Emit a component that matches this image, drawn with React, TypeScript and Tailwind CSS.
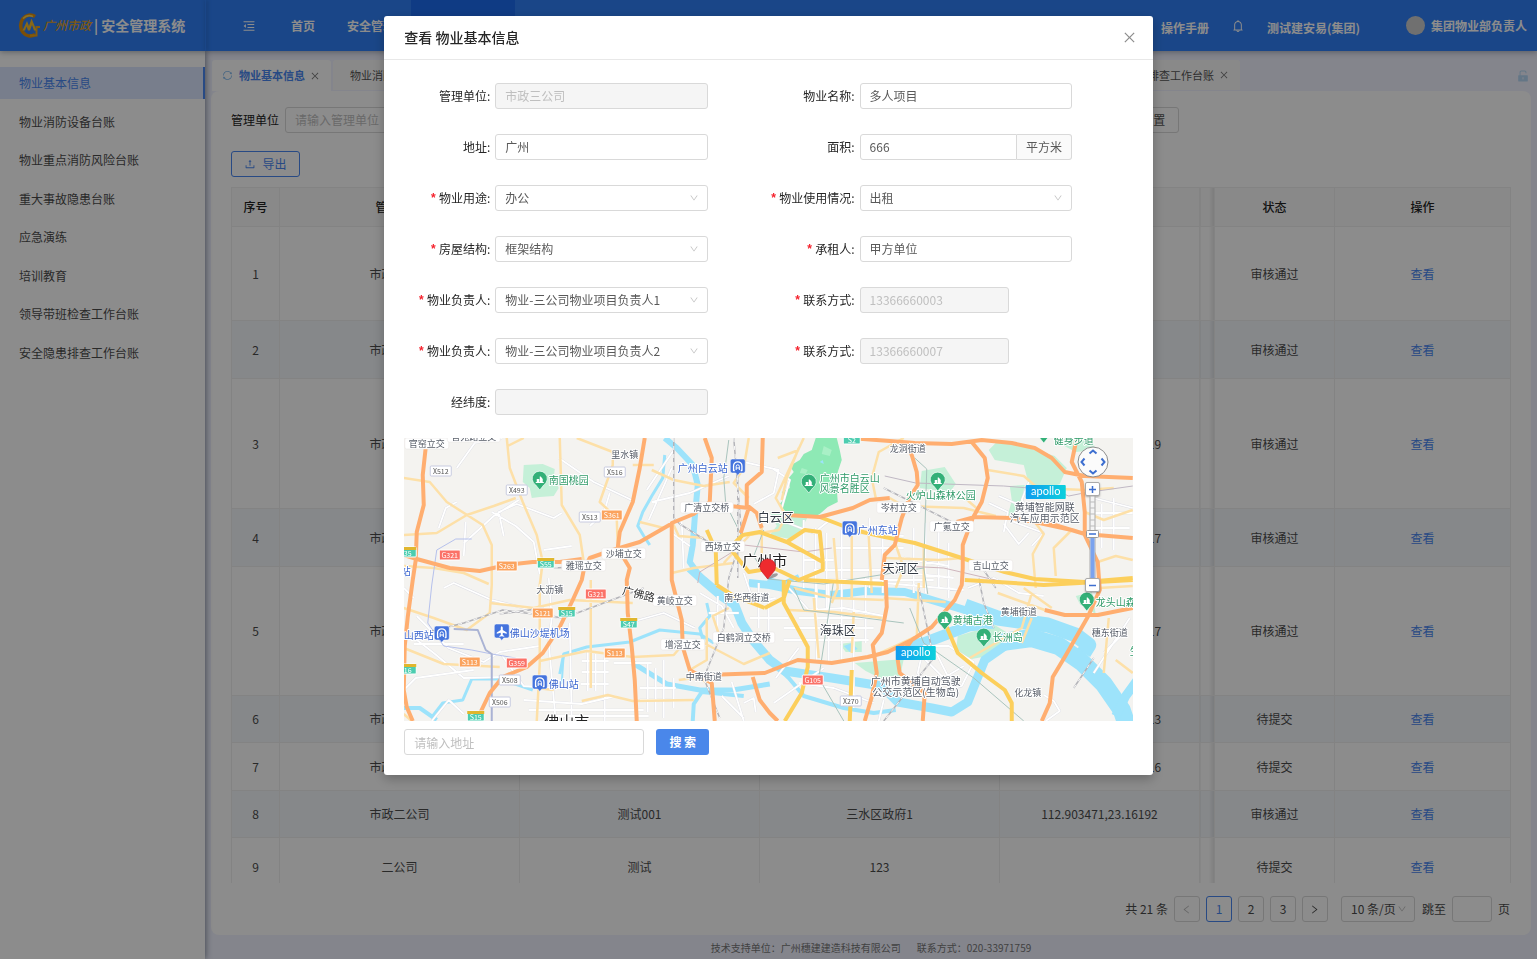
import * as React from "react";
import {
  AiFillUnlock,
  AiOutlineBell,
  AiOutlineClose,
  AiOutlineDown,
  AiOutlineLeft,
  AiOutlineMenuFold,
  AiOutlineRight,
  AiOutlineSync,
  AiOutlineUpload,
} from "react-icons/ai";

const menuItems = [
  "物业基本信息",
  "物业消防设备台账",
  "物业重点消防风险台账",
  "重大事故隐患台账",
  "应急演练",
  "培训教育",
  "领导带班检查工作台账",
  "安全隐患排查工作台账",
];

type Row = {
  company: string;
  name: string;
  address: string;
  position: string;
  status: string;
  height: string;
};

const rows: Row[] = [
  { company: "市政三公司", name: "", address: "", position: "", status: "审核通过", height: "h-[94px]" },
  { company: "市政三公司", name: "", address: "", position: "", status: "审核通过", height: "h-[58px]" },
  { company: "市政三公司", name: "", address: "", position: "113.264385,23.129119", status: "审核通过", height: "h-[130px]" },
  { company: "市政三公司", name: "", address: "", position: "113.264385,23.129117", status: "审核通过", height: "h-[58px]" },
  { company: "市政三公司", name: "", address: "", position: "113.264385,23.129117", status: "审核通过", height: "h-[129px]" },
  { company: "市政三公司", name: "", address: "", position: "113.264385,23.129113", status: "待提交", height: "h-[47px]" },
  { company: "市政三公司", name: "", address: "", position: "113.264385,23.129116", status: "待提交", height: "h-[48px]" },
  { company: "市政二公司", name: "测试001", address: "三水区政府1", position: "112.903471,23.16192", status: "审核通过", height: "h-[47px]" },
  { company: "二公司", name: "测试", address: "123", position: "", status: "待提交", height: "h-[59px]" },
];

function Logo() {
  return (
    <div className="flex w-[205px] shrink-0 items-center pl-[18px]">
      <svg className="h-[25px] w-[23px]" viewBox="0 0 23 25" fill="none">
        <path d="M17 3.500A9.500 10.500 0 1 0 17 21.500" stroke="#e08e0c" strokeWidth="3.500" />
        <path d="M12 22.500h6.500V14H22" stroke="#eda51a" strokeWidth="2" />
        <path d="M4.500 17.500L9 8l2 5 2.500-7.500 5 12h-2.500l-2-5.500-2 5.500h-2l-1.500-4-1.500 4z" fill="#f7bd2a" />
        <path d="M5 5.500A9 9 0 0 1 15 3.500" stroke="#f9cf4a" strokeWidth="1.500" />
      </svg>
      <span className="ml-[2px] font-['Liberation_Serif','Noto_Sans_CJK_SC',sans-serif] text-[12px] font-medium italic text-[#e5a323]">
        广州市政
      </span>
      <span className="ml-[3px] text-[14px] font-bold text-white">| 安全管理系统</span>
    </div>
  );
}

function Header() {
  return (
    <header className="relative z-10 flex h-[51px] shrink-0 bg-[#3080f8] text-[12px] font-bold text-white shadow-[0_1px_6px_rgba(0,21,41,0.35)]">
      <Logo />
      <div className="w-px shadow-[1px_0_4px_rgba(0,0,0,0.45)]" />
      <button className="ml-9 flex w-[14px] items-center" aria-label="收起菜单">
        <AiOutlineMenuFold size={14} />
      </button>
      <nav className="ml-[19px] flex">
        <a href="#" className="flex items-center px-4">首页</a>
        <a href="#" className="flex items-center px-4">安全管理</a>
        <a href="#" className="flex w-[104px] items-center justify-center bg-[#1d6cf0]">物业管理</a>
      </nav>
      <div className="ml-auto flex items-center pr-[10px]">
        <a href="#" className="pt-1">操作手册</a>
        <button className="ml-[22px]" aria-label="通知">
          <AiOutlineBell size={14} />
        </button>
        <a href="#" className="ml-[22px] pt-1">测试建安易(集团)</a>
        <span className="ml-[46px] h-[19px] w-[19px] rounded-full bg-[#ccc]" />
        <span className="ml-[6px]">集团物业部负责人</span>
      </div>
    </header>
  );
}

function Sidebar() {
  return (
    <aside className="z-[5] w-[205px] shrink-0 bg-white pt-4 text-[12px] shadow-[1px_0_6px_rgba(0,21,41,0.45)]">
      <nav className="flex h-[302px] flex-col justify-between">
        {menuItems.map((item, i) => (
          <a
            key={item}
            href="#"
            className={`flex h-8 items-center pl-[19px] ${
              i === 0 ? "border-r-2 border-[#4987f0] bg-[#dae6ff] text-[#4987f0]" : "text-[#4c4c4c]"
            }`}
          >
            {item}
          </a>
        ))}
      </nav>
    </aside>
  );
}

function Tabs() {
  return (
    <div className="flex h-[31px] items-stretch gap-[2px] pl-px text-[11px]">
      {menuItems.map((item, i) => (
        <div
          key={item}
          className={`flex shrink-0 items-center rounded-t-[3px] ${
            i === 0
              ? "bg-white pl-[10px] pr-[11px] font-bold text-[#4987f0]"
              : "mb-px bg-[#fafafa] pl-[17px] pr-[11px] text-[#555]"
          }`}
        >
          {i === 0 && <AiOutlineSync className="mr-[6px] text-[#7fb8ee]" size={11} />}
          {item}
          <button className="ml-[5px] w-[10px] text-[#777]" aria-label={`关闭${item}`}>
            <AiOutlineClose size={10} />
          </button>
        </div>
      ))}
      <AiFillUnlock className="ml-auto mr-px self-center text-[#b7d8f5]" size={14} />
    </div>
  );
}

function Filters() {
  return (
    <form className="flex w-[948px] items-center justify-between">
      {["管理单位", "物业名称", "物业地址", "状态"].map((label) => (
        <label key={label} className="flex items-center gap-[6px] text-[#222]">
          {label}
          <input
            className="h-[26px] w-[140px] rounded-[3px] border border-[#d9d9d9] px-[9px] pb-[2px] placeholder:text-[#bfbfbf]"
            placeholder={`请输入${label}`}
          />
        </label>
      ))}
      <button type="button" className="h-[26px] w-[54px] rounded-[3px] border border-[#d9d9d9] text-[#555]">
        重 置
      </button>
    </form>
  );
}

function DataTable() {
  const cell = "border border-[#efefef] text-center";
  const edge = "border border-[#efefef] bg-linear-to-r from-transparent from-60% to-black/10";
  return (
    <div className="mt-[10px] h-[696px] overflow-hidden">
      <table className="w-full table-fixed border-collapse text-[12px] text-[#4c4c4c]">
        <colgroup>
          <col className="w-[48px]" />
          <col />
          <col />
          <col />
          <col className="w-[200px]" />
          <col className="w-[15px]" />
          <col className="w-[120px]" />
          <col className="w-[176px]" />
        </colgroup>
        <thead>
          <tr className="h-[39px] bg-[#fafafa] text-[#222]">
            <th className={`${cell} font-medium`}>序号</th>
            <th className={`${cell} font-medium`}>管理单位</th>
            <th className={`${cell} font-medium`}>物业名称</th>
            <th className={`${cell} font-medium`}>地址</th>
            <th className={`${cell} font-medium`}>经纬度</th>
            <th className={edge} />
            <th className={`${cell} font-medium`}>状态</th>
            <th className={`${cell} font-medium`}>操作</th>
          </tr>
        </thead>
        <tbody>
          {rows.map((row, i) => (
            <tr key={i} className={`${row.height} ${i % 2 === 1 ? "bg-[#f4f8fc]" : "bg-white"}`}>
              <td className={cell}>{i + 1}</td>
              <td className={cell}>{row.company}</td>
              <td className={cell}>{row.name}</td>
              <td className={cell}>{row.address}</td>
              <td className={cell}>{row.position}</td>
              <td className={edge} />
              <td className={cell}>{row.status}</td>
              <td className={cell}>
                <a href="#" className="text-[#4987f0]">查看</a>
              </td>
            </tr>
          ))}
        </tbody>
      </table>
    </div>
  );
}

function Pagination() {
  const box = "flex h-[26px] w-[26px] items-center justify-center rounded-[3px] border";
  return (
    <div className="mt-[13px] flex items-center justify-end gap-[6px] text-[12px] text-[#4c4c4c]">
      <span>共 21 条</span>
      <button className={`${box} border-[#d9d9d9] text-[#bbb]`} aria-label="上一页">
        <AiOutlineLeft size={11} />
      </button>
      {[1, 2, 3].map((page) => (
        <button
          key={page}
          className={`${box} ${page === 1 ? "border-[#4987f0] text-[#4987f0]" : "border-[#d9d9d9]"}`}
        >
          {page}
        </button>
      ))}
      <button className={`${box} border-[#d9d9d9]`} aria-label="下一页">
        <AiOutlineRight size={11} />
      </button>
      <div className="relative ml-[7px]">
        <select
          aria-label="每页条数"
          className="h-[26px] w-[74px] appearance-none rounded-[3px] border border-[#d9d9d9] bg-white pl-[9px]"
        >
          <option>10 条/页</option>
        </select>
        <AiOutlineDown className="pointer-events-none absolute right-2 top-2 text-[#bbb]" size={10} />
      </div>
      <label className="flex items-center gap-[6px] px-px">
        跳至
        <input className="h-[26px] w-[40px] rounded-[3px] border border-[#d9d9d9]" />
        页
      </label>
    </div>
  );
}

/* ---------- map ---------- */

const water: [string, number][] = [
  ["M261 0L273 10 289 27 294 47 291 80 289 107 286 124 296 138 306 147", 6],
  ["M261 17L259 40 248 58 239 74 234 88 240 98 246 107", 3],
  ["M286 130L299 142 319 159 331 167 338 185 349 202 366 222 381 233 428 240 478 248 494 264 528 270 548 274 564 264 574 239 581 222 601 208 628 201", 9],
  ["M345 145L366 147 395 153 428 157 461 153 501 154 528 162 561 172 594 181", 8],
  ["M561 168L594 180 644 187 672 197 685 207 680 215", 15],
  ["M502 208L520 205 541 197 565 188 590 185", 11],
  ["M598 204L628 200 655 208 678 224 700 246 718 272 724 290", 18],
  ["M735 240L722 258 712 278", 9],
  ["M366 222L385 240 400 258 440 270 470 275 492 272", 4],
  ["M0 270L16 270 33 282", 4],
  ["M29 278L39 265 59 262 68 241 96 241 129 252", 3],
  ["M156 236L160 216 183 209 226 204 256 192 296 196 310 205", 3],
  ["M229 225L250 238 263 246 296 252 329 252 366 246", 5],
  ["M289 283L290 266 298 254 340 258", 4],
  ["M300 205L296 190 306 178 303 165", 3],
  ["M160 216L158 245 138 251", 2],
  ["M364 141L380 145 395 138", 4],
];

const greens = [
  "M120 27L139 26 151 31 150 40 155 50 150 58 136 59 128 60 126 50 119 44z",
  "M366 74L404 79 396 94 386 101 366 97 373 88z",
  "M594 3L625 10 651 18 663 30 656 46 640 52 625 46 620 27 591 22 585 12z",
  "M661 1L688 1 692 12 672 14 655 5z",
  "M518 33L541 29 552 46 546 54 530 52 516 50z",
  "M606 48L621 47 616 72 604 78 608 62z",
  "M554 198L591 187 604 195 590 217 568 221 552 214z",
  "M451 225L500 221 496 240 478 241 462 233z",
  "M436 206L458 203 458 214 442 214z",
  "M672 158L688 154 692 176 676 166z",
];

const localRoads =
  "M35 90L42 70 53 64M53 30L71 5M70 5L98 0M60 105L68 98 90 78 115 62M88 74L112 88 130 104 136 136M62 84L60 118M100 98L95 74 113 66 150 80 158 75M140 112L168 108M155 20L190 44 228 62M186 88L200 75 206 55M40 150L50 145 88 162 120 170 155 180M13 178L45 210 80 224 96 214 136 208M0 192L30 215 60 240 99 239M98 217L120 248 160 250M28 283L45 262 60 276M145 140L148 180 145 205 152 283M166 185L168 283M184 212V253M192 216V253M201 216V283M178 223H205M178 234H205M177 246H205M120 262L178 266 212 258M125 272H240M152 278H245M244 225V274M252 230V274M260 222V280M270 240V270M236 250H272M236 262H268M210 225H248M224 185L260 175 291 190M243 52L270 12M248 64L286 55 325 38M268 30L245 82M268 95L286 108M278 84L280 130M296 155L318 168 330 190M305 175H335M314 158V205M340 24L375 32 370 55 350 66M368 30L386 42 378 70M384 85L410 95 426 82M400 82V150M412 90V160M423 95V170M438 92V160M466 80V150M479 96V155M455 95L500 98M430 110H500M400 122H430M410 132H478M425 142H530M385 150L405 172 440 170 480 178M395 180H475M413 145V225M425 145V225M438 145V225M450 160V270M462 140V205M380 190H470M380 202H465M395 245L430 250 470 265M520 208L545 208 570 224 558 248 530 255 514 235zM520 220L540 240 560 228M530 210L550 250M640 257L650 263 656 273 642 283M595 58L618 68 610 84 640 95 628 108M585 65L604 74 600 94M625 44L618 62 628 78 660 85M600 86L615 106 625 95M690 60L729 70M698 66V110M710 60V112M686 75H729M686 90H726M500 120L545 128M505 135L550 140M510 90V155M522 85V155M535 92V150M545 105V160M480 145L560 152M700 215L720 195M690 235L726 180M564 150L590 140 615 155 640 158M340 135L350 165 372 160M355 145V190M365 160V200M346 180H385M0 150L10 160M395 210L372 240M370 265L420 230M318 258L340 280M328 244L340 283M340 265L350 260 352 274M0 252L12 240 70 232M10 206H60M480 262L475 283";

const lightRoads =
  "M103 0L106 30 119 64 133 97 139 124 136 147 136 225 133 283M156 0L158 67 176 97 180 124M0 40L26 44 43 64 79 87 88 107 88 147 86 175 63 192 30 180 0 170M0 97L33 95 63 77 90 68 112 60M173 0L209 14 209 27 196 64 213 80 214 110M120 0L104 8M229 27H250M0 128L30 130 60 135 85 146M0 210L40 226 96 229M86 165L130 170 166 162 229 165M136 223L183 213 229 219 270 217 283 202M187 142V250M178 263L204 257 229 263 290 262M133 250L150 252M345 0L340 30 330 45 345 60M395 10L383 40 378 62M400 0L372 60 380 74M383 77L375 92 346 97 320 125M269 85L275 98 300 100M236 84L260 90M326 44L300 48 270 42 248 32M374 20L395 12M500 0L475 14 468 40 472 60M486 60L500 68 560 70 592 78M561 60L575 72M584 32L620 38 634 50 681 52 710 50M631 84L640 96 629 116 632 150M668 92L650 110 652 138M681 74L700 82 729 72M694 124L712 118 729 122M492 107L500 130 492 150M520 108V150M558 120L535 122 481 120M430 100L434 150 428 165M448 98V160M465 98L468 155M390 150L430 160 480 162M384 172L430 174 478 180M410 160L415 220M450 174L448 215M515 145L513 200M480 160L542 164M594 155L641 172M620 150L648 170M695 150L729 148M628 155L618 190 566 220M628 180L618 205M470 218L520 195M300 205L340 226 366 215M308 245L290 240 275 242M286 232L303 222 303 180M318 205L309 178 325 170M700 235L705 180M729 235L712 222M0 276L8 283M330 125L290 130 268 135M358 90V118";

const yellowRoads =
  "M303 92L312 112 313 147M313 147L330 158 361 170M326 110L339 97 356 94 383 104 419 124 419 132 395 142 370 130 345 134 326 110M383 104L401 92 416 94 419 124M416 79L450 92 481 99 511 105 558 120 601 134 631 141 681 144 729 140M386 142L380 160 361 170M380 142L380 165 391 185 404 209 404 229 398 255 381 283M448 232L446 283M543 189L554 215 578 235 601 252 608 265 608 283M400 142L481 146M561 142L640 147 729 142";

const orangeRoads =
  "M23 0L19 37 20 67 13 94 12 122 9 142 4 179 1 208 0 252 3 269 9 283M0 117L13 121 46 130 76 133 103 127 129 124 156 124 178 121M241 0L236 30 229 64 216 94 214 110 226 130 223 142 224 175 228 209 231 242 233 283M269 85L236 104 209 112 186 120 180 132 178 142 169 162 156 189 139 215 123 229 99 239 86 255 74 280M301 0L308 20 306 64 290 76 268 85 268 142 278 182 279 209 286 232 308 245 311 283M359 0L358 34 343 47 343 67 353 75 358 90M326 68L345 70M345 70L337 95M383 77L416 79 449 70 466 62 486 60M446 0L486 3 511 5 548 6 578 2 608 5 631 10 648 20 661 34 681 38 729 40M501 6L508 17 513 34 514 47 506 59 498 80 491 107 481 117 478 142M568 4L581 20 584 40 578 64 569 80 559 107 559 130 558 147 551 162 528 189 508 202 484 214 464 219 428 225 394 222 361 235 303 237M553 84L571 79 608 80 631 84 668 92 681 96 729 100M673 0L668 24 678 44 681 74 681 97 694 124 696 152 684 179 661 219 649 239 646 265 638 283M641 172L661 177 694 177 729 170M482 142L483 169 478 195 469 207 473 235 468 259 461 283M349 239L356 262 366 275 374 283M508 202L494 222 496 235 521 255 519 283M641 84L681 96";

const rails =
  "M270 0V80L276 86 314 110M0 200L60 185 99 172 160 180 240 150M96 176L140 170M330 0L338 98 325 140 320 190 300 240 316 280M334 38V140M480 50L560 90M575 140L580 165 590 190M580 132L592 150M515 150L530 220 480 283M690 220L670 250M150 130L190 128";

const metro =
  "M325 2L320 40 322 66 338 98M360 92L350 118 364 141M511 20L523 31 520 130 524 156M364 141L420 146 520 130M430 142L415 240 440 283M506 170L520 205 570 240 620 283M390 150L400 172 500 185";

type MapLabel = [string, number, number];

const boxedLabels: MapLabel[] = [
  ["官窑立交", 23, 6],
  ["官宛路立交", 70, -1],
  ["沙埔立交", 220, 116],
  ["雅瑶立交", 180, 128],
  ["广清立交桥", 303, 70],
  ["西场立交", 319, 109],
  ["岑村立交", 495, 70],
  ["广氪立交", 548, 89],
  ["吉山立交", 587, 128],
  ["黄岐立交", 271, 163],
  ["增滘立交", 279, 207],
  ["白鹤洞立交桥", 340, 200],
];

const plainLabels: MapLabel[] = [
  ["里水镇", 221, 17],
  ["龙洞街道", 504, 11],
  ["大沥镇", 146, 152],
  ["南华西街道", 343, 160],
  ["中南街道", 300, 239],
  ["黄埔街道", 615, 174],
  ["穗东街道", 706, 195],
  ["化龙镇", 624, 255],
];

const demoZoneLabels: MapLabel[] = [
  ["黄埔智能网联", 641, 70],
  ["汽车应用示范区", 641, 81],
  ["广州市黄埔自动驾驶", 512, 244],
  ["公交示范区(生物岛)", 512, 255],
];

const roadSigns: { text: string; x: number; y: number; fill: string }[] = [
  { text: "X512", x: 37, y: 33, fill: "#fff" },
  { text: "X493", x: 113, y: 52, fill: "#fff" },
  { text: "X516", x: 211, y: 34, fill: "#fff" },
  { text: "X513", x: 186, y: 79, fill: "#fff" },
  { text: "X508", x: 106, y: 242, fill: "#fff" },
  { text: "X506", x: 96, y: 264, fill: "#fff" },
  { text: "X270", x: 447, y: 263, fill: "#fff" },
  { text: "S361", x: 208, y: 77, fill: "#fba35e" },
  { text: "S263", x: 103, y: 128, fill: "#fba35e" },
  { text: "S121", x: 139, y: 175, fill: "#fba35e" },
  { text: "S113", x: 66, y: 224, fill: "#fba35e" },
  { text: "S113", x: 211, y: 215, fill: "#fba35e" },
  { text: "G321", x: 46, y: 117, fill: "#fb7268" },
  { text: "G321", x: 192, y: 156, fill: "#fb7268" },
  { text: "G359", x: 113, y: 225, fill: "#fb7268" },
  { text: "G105", x: 409, y: 242, fill: "#fb7268" },
  { text: "S55", x: 142, y: 125, fill: "#4dcdb0" },
  { text: "35", x: 4, y: 114, fill: "#4dcdb0" },
  { text: "S15", x: 163, y: 174, fill: "#4dcdb0" },
  { text: "S47", x: 225, y: 185, fill: "#4dcdb0" },
  { text: "16", x: 4, y: 231, fill: "#4dcdb0" },
  { text: "S15", x: 72, y: 278, fill: "#4dcdb0" },
  { text: "S2", x: 448, y: 1, fill: "#4dcdb0" },
];

function RoadSign({ text, x, y, fill }: { text: string; x: number; y: number; fill: string }) {
  const plain = fill === "#fff";
  const green = fill === "#4dcdb0";
  const w = green ? 17 : 21;
  return (
    <g>
      <rect x={x - w / 2} y={y - 5} width={w} height="10" rx="1" fill={fill} stroke={plain ? "#c8cbe0" : "#fff"} />
      {green && <rect x={x - w / 2} y={y - 5} width={w} height="3" fill="#e0b62e" />}
      <text x={x} y={green ? y + 4 : y + 3} textAnchor="middle" fontSize={7} fill={plain ? "#555" : "#fff"}>
        {text}
      </text>
    </g>
  );
}

function ParkPin({ x, y }: { x: number; y: number }) {
  return (
    <g transform={`translate(${x} ${y})`}>
      <path d="M0 10L-4 5A7.500 7.500 0 1 1 4 5z" fill="#33b078" stroke="#fff" strokeWidth=".6" />
      <path d="M-4 3V2h1V-1h2.500V2H0v-5.500h1L3 -1v3h1v1z" fill="#fff" />
    </g>
  );
}

function StationPin({ x, y, airport }: { x: number; y: number; airport?: boolean }) {
  return (
    <g transform={`translate(${x} ${y})`}>
      <path
        d="M-5.500 -8h11a2 2 0 0 1 2 2V4a2 2 0 0 1-2 2H2L0 8.500-2 6h-3.500a2 2 0 0 1-2-2V-6a2 2 0 0 1 2-2z"
        fill="#4473dd"
        stroke="#fff"
        strokeWidth=".5"
      />
      {airport ? (
        <path
          d="M0 -6l1 1.500v2.500l4 2.500v1.200l-4-1V3l1.500 1v.8L0 4.200-2.500 4.800V4L-1 3V.7l-4 1V.5L-1-2v-2.500z"
          fill="#fff"
        />
      ) : (
        <g fill="none" stroke="#fff">
          <path d="M-3 3.500H-4.200V-1a4.200 4.200 0 0 1 8.400 0v4.500H3" strokeWidth="1.300" />
          <path d="M-1.600 3V-.6a1.600 1.600 0 0 1 3.200 0V3M-1.600 1h3.200" strokeWidth="1" />
        </g>
      )}
    </g>
  );
}

function ApolloBadge({ x, y }: { x: number; y: number }) {
  return (
    <g>
      <rect x={x - 20} y={y - 7} width="40" height="14" rx="1" fill="url(#apollo)" />
      <text x={x} y={y + 3} textAnchor="middle" fontSize={11} fill="#fff" fontFamily="Lato, sans-serif">
        apollo
      </text>
    </g>
  );
}

function MapCanvas() {
  return (
    <svg
      className="block h-[283px] w-full bg-[#f4f3f0] font-['Noto_Sans_CJK_SC',sans-serif]"
      viewBox="0 0 729 283"
      preserveAspectRatio="xMidYMid slice"
      fill="none"
      strokeLinejoin="round"
    >
      <defs>
        <linearGradient id="apollo">
          <stop offset="0" stopColor="#109cf0" />
          <stop offset="1" stopColor="#0cd0dc" />
        </linearGradient>
      </defs>
      {greens.map((d) => (
        <path key={d} d={d} fill="#c5f0d8" />
      ))}
      <path
        d="M412 0L433 0 436 12 438 22 434 34 433 50 434 64 424 69 416 76 408 80 394 77 382 74 376 66 381 60 378 54 386 50 385 40 390 34 386 28 396 22 400 16 408 12z"
        fill="#8ee9b5"
      />
      <path d="M420 8L428 12 426 18 418 16zM398 30L404 32 402 36 396 35z" fill="#a9f0c6" />
      {water.map(([d, w]) => (
        <path key={d} d={d} stroke="#9de3fb" strokeWidth={w} />
      ))}
      <path d="M440 208l8-3 6 6-8 3zM416 24l3-2 1 4z" fill="#9de3fb" />
      <path d={localRoads} stroke="#dcdde4" strokeWidth="2.500" />
      <path d={localRoads} stroke="#fff" strokeWidth="1.800" />
      <path d={lightRoads} stroke="#fde0a8" strokeWidth="2.500" />
      <path d={metro} stroke="#a9c4bd" strokeWidth="1" />
      <path d="M28 147L33 112 52 101 68 101M28 147L24 185 40 208 68 212 88 216 112 220" stroke="#b6c1ec" strokeWidth="1" />
      <path d="M50 191L74 192 82 212 88 216V283" stroke="#aab3d4" strokeWidth="2" />
      <path d="M294 145L296 134 340 107 400 114 428 110M500 128L540 130 600 144" stroke="#cfb6bd" strokeWidth="1" />
      <path d="M481 38L512 45 600 48 650 52 665 58 680 55 729 48" stroke="#c0b8c4" strokeWidth="1" />
      <path d={rails} stroke="#b3b3b8" strokeWidth="1.500" />
      <path d={rails} stroke="#f8f8f8" strokeWidth="1" strokeDasharray="4 4" />
      <path d={yellowRoads} stroke="#fccf5c" strokeWidth="4" />
      <path d={orangeRoads} stroke="#ffae70" strokeWidth="4" />

      {boxedLabels.map(([text, x, y]) => (
        <g key={text}>
          <rect
            x={x - text.length * 4.5 - 4}
            y={y - 6}
            width={text.length * 9 + 8}
            height="11"
            rx="2"
            fill="#fff"
            stroke="#e7e3e0"
            strokeWidth=".5"
          />
          <text x={x} y={y + 3} textAnchor="middle" fontSize={9} fill="#555b66">
            {text}
          </text>
        </g>
      ))}
      {roadSigns.map((sign) => (
        <RoadSign key={`${sign.text}-${sign.x}`} {...sign} />
      ))}
      <g stroke="#fff" strokeWidth="2" paintOrder="stroke" fill="#555b66" fontSize={9}>
        {plainLabels.map(([text, x, y]) => (
          <text key={text} x={x} y={y + 3} textAnchor="middle">
            {text}
          </text>
        ))}
        {demoZoneLabels.map(([text, x, y]) => (
          <text key={text} x={x} y={y + 3} textAnchor="middle" fontSize={10}>
            {text}
          </text>
        ))}
        <g fill="#333a45" fontSize={12} textAnchor="middle">
          <text x="372" y="84">白云区</text>
          <text x="497" y="135">天河区</text>
          <text x="434" y="197">海珠区</text>
          <text x="361" y="128" fontSize={15} fill="#222">广州市</text>
          <text x="163" y="289" fontSize={15} fill="#222">佛山市</text>
          <text x="235" y="160" fontSize={11} fill="#333" transform="rotate(14 235 156)">广佛路</text>
        </g>
        <g fill="#3b66cf" fontSize={10}>
          <text x="274" y="34">广州白云站</text>
          <text x="454" y="96">广州东站</text>
          <text x="0" y="201">山西站</text>
          <text x="106" y="199">佛山沙堤机场</text>
          <text x="145" y="250">佛山站</text>
          <text x="-3" y="137">站</text>
        </g>
        <g fill="#2f9a68" fontSize={10}>
          <text x="145" y="46">南国桃园</text>
          <text x="416" y="44">广州市白云山</text>
          <text x="416" y="54">风景名胜区</text>
          <text x="502" y="61">火炉山森林公园</text>
          <text x="650" y="6">健身步道</text>
          <text x="549" y="186">黄埔古港</text>
          <text x="589" y="203">长洲岛</text>
          <text x="692" y="168">龙头山森</text>
          <text x="726" y="217">生</text>
        </g>
      </g>
      <ParkPin x={136} y={42} />
      <ParkPin x={405} y={45} />
      <ParkPin x={534} y={43} />
      <ParkPin x={640} y={-5} />
      <ParkPin x={541} y={182} />
      <ParkPin x={580} y={199} />
      <ParkPin x={683} y={163} />
      <StationPin x={334} y={29} />
      <StationPin x={446} y={91} />
      <StationPin x={38} y={196} />
      <StationPin x={98} y={194} airport />
      <StationPin x={136} y={245} />
      <ApolloBadge x={642} y={54} />
      <ApolloBadge x={512} y={215} />
      <path d="M364 141l5-5q6-2 5 1-3 3-10 4z" fill="#777" opacity=".7" />
      <path d="M364 141L357.500 133A7.800 7.800 0 1 1 370.500 133z" fill="#ee2b2e" stroke="#c11c20" strokeWidth=".6" />
    </svg>
  );
}

function MapControls() {
  const step =
    "flex h-[14px] w-[15px] items-center justify-center rounded-[2px] border border-[#aaa] bg-white shadow-[0_1px_2px_rgba(0,0,0,0.3)]";
  return (
    <div className="absolute right-6 top-2 flex w-8 flex-col items-center">
      <button aria-label="平移地图" className="h-8 w-8">
        <svg viewBox="0 0 32 32" fill="none">
          <circle cx="16" cy="16" r="15" fill="#fbfbfb" stroke="#8d8d8d" />
          <path
            d="M12.500 7.500L16 4.500l3.500 3M12.500 24.500l3.500 3 3.500-3M7.500 12.500l-3 3.500 3 3.500M24.500 12.500l3 3.500-3 3.500"
            stroke="#3d6fd0"
            strokeWidth="2"
          />
        </svg>
      </button>
      <button aria-label="放大" className={`${step} mt-1`}>
        <svg className="w-[9px]" viewBox="0 0 9 9">
          <path d="M1 4.500h7M4.500 1v7" stroke="#3d6fd0" strokeWidth="1.500" />
        </svg>
      </button>
      <div className="relative">
        <svg className="block h-[82px] w-[15px]" viewBox="0 0 15 82">
          <rect x="5" y="0" width="5" height="82" fill="#f4f4f4" stroke="#aaa" />
          <path d="M5 6h5M5 12h5M5 18h5M5 24h5M5 30h5" stroke="#bbb" />
          <rect x="5.500" y="38" width="4" height="44" fill="#7ba3ee" />
          <rect x="1.500" y="34.500" width="12" height="7" rx="1" fill="#fff" stroke="#999" />
          <path d="M4 38h7" stroke="#3d6fd0" strokeWidth="1.500" />
        </svg>
        <input
          type="range"
          aria-label="缩放级别"
          className="absolute inset-0 h-full w-full opacity-0 [writing-mode:vertical-lr]"
        />
      </div>
      <button aria-label="缩小" className={step}>
        <svg className="w-[9px]" viewBox="0 0 9 9">
          <path d="M1 4.500h7" stroke="#3d6fd0" strokeWidth="1.500" />
        </svg>
      </button>
    </div>
  );
}

/* ---------- modal ---------- */

type Field = {
  id: string;
  label: string;
  value: string;
  required?: boolean;
  disabled?: boolean;
  kind?: "select" | "area" | "phone";
};

const fields: Field[] = [
  { id: "company", label: "管理单位", value: "市政三公司", disabled: true },
  { id: "name", label: "物业名称", value: "多人项目" },
  { id: "address", label: "地址", value: "广州" },
  { id: "area", label: "面积", value: "666", kind: "area" },
  { id: "purpose", label: "物业用途", value: "办公", required: true, kind: "select" },
  { id: "usage", label: "物业使用情况", value: "出租", required: true, kind: "select" },
  { id: "structure", label: "房屋结构", value: "框架结构", required: true, kind: "select" },
  { id: "tenant", label: "承租人", value: "甲方单位", required: true },
  { id: "manager1", label: "物业负责人", value: "物业-三公司物业项目负责人1", required: true, kind: "select" },
  { id: "phone1", label: "联系方式", value: "13366660003", required: true, disabled: true, kind: "phone" },
  { id: "manager2", label: "物业负责人", value: "物业-三公司物业项目负责人2", required: true, kind: "select" },
  { id: "phone2", label: "联系方式", value: "13366660007", required: true, disabled: true, kind: "phone" },
  { id: "position", label: "经纬度", value: "", disabled: true },
];

const controlClass = "h-[26px] w-full rounded-[3px] border border-[#d9d9d9] bg-white px-[9px] text-[#595959]";
const inputClass = `${controlClass} pb-[2px] disabled:bg-[#f5f5f5] disabled:text-[#bfbfbf]`;

function FieldControl({ field }: { field: Field }) {
  if (field.kind === "select") {
    return (
      <div className="relative w-7/12">
        <select id={field.id} className={`${controlClass} appearance-none`}>
          <option>{field.value}</option>
        </select>
        <AiOutlineDown className="pointer-events-none absolute right-[9px] top-2 text-[#bfbfbf]" size={10} />
      </div>
    );
  }
  if (field.kind === "area") {
    return (
      <div className="flex w-7/12">
        <input id={field.id} defaultValue={field.value} className={`${inputClass} min-w-0 flex-1 rounded-r-none`} />
        <span className="flex items-center rounded-r-[3px] border border-l-0 border-[#d9d9d9] bg-[#fafafa] px-[9px] text-[#595959]">
          平方米
        </span>
      </div>
    );
  }
  return (
    <div className={field.kind === "phone" ? "w-[149px]" : "w-7/12"}>
      <input id={field.id} defaultValue={field.value} disabled={field.disabled} className={inputClass} />
    </div>
  );
}

function PropertyModal() {
  return (
    <div className="fixed inset-0 z-50 flex items-start justify-center bg-black/45 pt-4">
      <div
        role="dialog"
        aria-label="查看 物业基本信息"
        className="w-1/2 rounded-[3px] bg-white text-[12px] shadow-[0_4px_12px_rgba(0,0,0,0.25)]"
      >
        <div className="flex h-11 items-center justify-between border-b border-[#e8e8e8] px-5">
          <h2 className="text-[14px] font-medium text-[#262626]">查看 物业基本信息</h2>
          <button aria-label="关闭" className="-mr-1 text-[#8c8c8c]">
            <AiOutlineClose size={15} />
          </button>
        </div>
        <div className="px-5 pb-5 pt-[23px]">
          <form className="grid grid-cols-2 gap-y-[25px]">
            {fields.map((field) => (
              <div key={field.id} className="flex items-center">
                <label
                  htmlFor={field.id}
                  className="flex w-1/4 justify-end whitespace-nowrap pr-[5px] text-[#262626]"
                >
                  {field.required && (
                    <span className="mr-[2px] pt-1 font-['Liberation_Mono',monospace] font-bold leading-none text-[#f5222d]">
                      *
                    </span>
                  )}
                  {field.label}:
                </label>
                <FieldControl field={field} />
              </div>
            ))}
          </form>
          <div className="relative mt-[23px] overflow-hidden">
            <MapCanvas />
            <MapControls />
          </div>
          <div className="mt-2 flex gap-3">
            <input
              aria-label="地址"
              placeholder="请输入地址"
              className="h-[26px] w-[240px] rounded-[3px] border border-[#d9d9d9] px-[9px] placeholder:text-[#bfbfbf]"
            />
            <button className="h-[26px] w-[53px] rounded-[3px] bg-[#4a87ea] font-bold text-white">搜 索</button>
          </div>
        </div>
      </div>
    </div>
  );
}

export default function App() {
  return (
    <div className="flex h-screen flex-col overflow-hidden bg-[#f0f2ff] font-['Noto_Sans_CJK_SC',sans-serif] text-[12px]">
      <Header />
      <div className="flex min-h-0 flex-1">
        <Sidebar />
        <div className="flex min-w-0 flex-1 flex-col pl-[6px] pr-[6px] pt-[9px]">
          <Tabs />
          <main className="flex-1 rounded-[8px] bg-white px-5 pt-4">
            <Filters />
            <button className="mt-[18px] flex h-[26px] w-[69px] items-center justify-center gap-[6px] rounded-[3px] border border-[#4987f0] text-[#4987f0]">
              <AiOutlineUpload size={12} />
              导出
            </button>
            <DataTable />
            <Pagination />
          </main>
          <footer className="flex h-6 items-center justify-center gap-4 text-[10px] text-[#777]">
            <span>技术支持单位：广州穗建建造科技有限公司</span>
            <span>联系方式：020-33971759</span>
          </footer>
        </div>
      </div>
      <PropertyModal />
    </div>
  );
}
